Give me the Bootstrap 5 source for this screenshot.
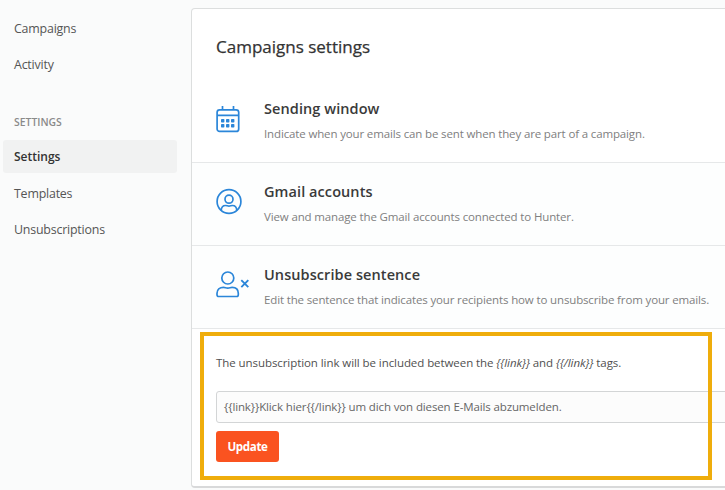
<!DOCTYPE html>
<html lang="en">
<head>
<meta charset="utf-8">
<meta name="viewport" content="width=device-width, initial-scale=1">
<title>Campaigns settings</title>
<link href="https://cdn.jsdelivr.net/npm/bootstrap@5.3.0/dist/css/bootstrap.min.css" rel="stylesheet">
<style>
body{font-family:"Open Sans","Noto Sans",sans-serif;background:#fafbfb;color:#555;font-size:12px;width:725px;height:490px;overflow:hidden}
.side{width:191px;padding:12px 14px 0 3px}
.side .nav-link{height:33px;line-height:33px;margin-bottom:3.4px;padding:0 11px;font-size:12.4px;letter-spacing:-.2px;color:#555;border-radius:3px}
.side .nav-link.active{background:#f1f2f2;color:#333;font-weight:600;font-size:12px;letter-spacing:0}
.side-title{font-size:10.4px;font-weight:600;color:#8a8a8a;padding:0 11px;line-height:16px;margin:29px 0 10.5px}
.panel{width:560px;height:480px;margin-top:8px;background:#fff;border:1px solid #dcdede;border-bottom:2px solid #d8d9da;border-radius:4px}
.panel h1{font-size:17px;font-weight:400;-webkit-text-stroke:.25px #333;line-height:22px;color:#333;margin:0;padding:27px 0 0 24px;height:71px}
.option{height:83px;padding:19px 0 0 24px;border-bottom:1px solid #e6e8e9;background:#fdfefe}
.option.first{background:#fff}
.option svg{width:48px;height:44px;flex:none}
.option h2{font-size:14.5px;letter-spacing:.08px;font-weight:600;line-height:20px;color:#3a3a3a;margin:0}
.option p{font-size:11.5px;letter-spacing:-.14px;line-height:16px;color:#808080;margin:7px 0 0;white-space:nowrap}
.editor{padding:25px 0 0 24px}
.editor p{font-size:11.5px;letter-spacing:-.07px;line-height:18px;margin:0 0 19px;color:#505050}
.editor .form-control{height:32px;font-size:11.5px;letter-spacing:-.125px;padding:0 7px;border:1px solid #d3d5d6;border-radius:3px;color:#666;background:#fcfcfc;line-height:30px}
.editor .btn{width:63px;height:31px;margin-top:8px;padding:0;font-size:11.6px;letter-spacing:-.35px;font-weight:700;color:#fff;background:#fa5320;border:0;border-radius:3px}
.callout{left:200px;top:332px;width:512px;height:148px;border:4px solid #efad0c;pointer-events:none}
</style>
</head>
<body class="position-relative">
<div class="d-flex">
  <nav class="side flex-shrink-0 nav flex-column flex-nowrap">
    <a class="nav-link" href="#">Campaigns</a>
    <a class="nav-link" href="#">Activity</a>
    <div class="side-title">SETTINGS</div>
    <a class="nav-link active" href="#">Settings</a>
    <a class="nav-link" href="#">Templates</a>
    <a class="nav-link" href="#">Unsubscriptions</a>
  </nav>
  <main class="panel flex-shrink-0">
    <h1>Campaigns settings</h1>
    <section class="option first d-flex">
      <svg viewBox="0 0 48 44" fill="none" stroke="#2b86d9" stroke-width="1.7"><rect x="1.1" y="10.8" width="21.6" height="21.6" rx="2.5"/><path d="M1 16.300h21.800M6.500 7v3.800M17.500 7v3.800"/><g fill="#2b86d9" stroke="none"><rect x="5" y="20" width="3.400" height="3.400" rx=".7"/><rect x="10" y="20" width="3.400" height="3.400" rx=".7"/><rect x="15" y="20" width="3.400" height="3.400" rx=".7"/><rect x="5" y="25" width="3.400" height="3.400" rx=".7"/><rect x="10" y="25" width="3.400" height="3.400" rx=".7"/><rect x="15" y="25" width="3.400" height="3.400" rx=".7"/></g></svg>
      <div><h2>Sending window</h2><p>Indicate when your emails can be sent when they are part of a campaign.</p></div>
    </section>
    <section class="option d-flex">
      <svg viewBox="0 0 48 44" fill="none" stroke="#2b86d9" stroke-width="1.7"><circle cx="13" cy="19.500" r="11.900"/><circle cx="13" cy="17.200" r="4"/><path d="M5.200 28.500c.2-3.500 1.800-5 4.300-5 1.500 0 2 .6 3.500.6s2-.6 3.500-.6c2.500 0 4.100 1.500 4.300 5"/></svg>
      <div><h2>Gmail accounts</h2><p>View and manage the Gmail accounts connected to Hunter.</p></div>
    </section>
    <section class="option d-flex">
      <svg viewBox="0 0 48 44" fill="none" stroke="#2b86d9" stroke-width="1.7"><circle cx="11.800" cy="13" r="6"/><path d="M7.500 22.300c1.800 0 2.300.8 4.300.8s2.500-.8 4.300-.8c3.800 0 6.200 2.300 6.200 6v1.500c0 1-.7 1.700-1.700 1.700H2.700c-1 0-1.700-.7-1.700-1.700v-1.500c0-3.700 2.700-6 6.500-6z"/><path d="M25.300 15.200l7 7M32.300 15.200l-7 7" stroke-width="1.900"/></svg>
      <div><h2>Unsubscribe sentence</h2><p>Edit the sentence that indicates your recipients how to unsubscribe from your emails.</p></div>
    </section>
    <form class="editor">
      <p>The unsubscription link will be included between the <em>{{link}}</em> and <em>{{/link}}</em> tags.</p>
      <div class="form-control">{{link}}Klick hier{{/link}} um dich von diesen E-Mails abzumelden.</div>
      <button type="button" class="btn">Update</button>
    </form>
  </main>
</div>
<div class="callout position-absolute"></div>
<script src="https://cdn.jsdelivr.net/npm/bootstrap@5.3.0/dist/js/bootstrap.bundle.min.js"></script>
</body>
</html>
